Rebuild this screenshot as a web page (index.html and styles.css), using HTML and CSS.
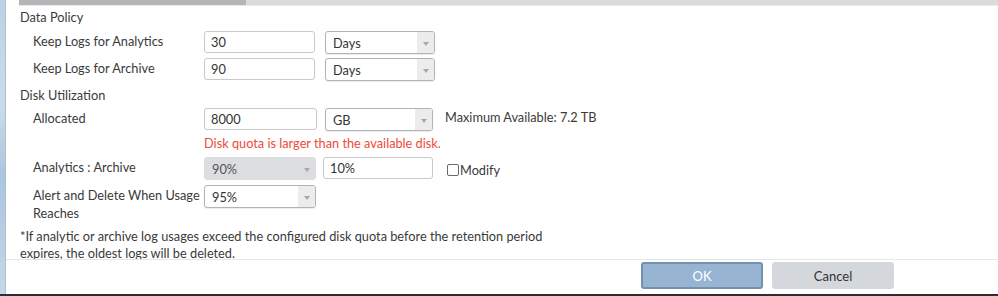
FILE: index.html
```html
<!DOCTYPE html>
<html>
<head>
<meta charset="utf-8">
<link rel="stylesheet" href="styles.css">
</head>
<body>
<div class="window">
  <div class="desk"></div>
  <div class="dialog">
    <div class="scroll">
      <div class="hbar"><div class="thumb"></div></div>
      <div class="content">
        <div class="section-title">Data Policy</div>
        <div class="row row-first">
          <div class="label">Keep Logs for Analytics</div>
          <div class="input w111">30</div>
          <div class="select w110 gap10">Days<span class="arrow"><i></i></span></div>
        </div>
        <div class="row">
          <div class="label">Keep Logs for Archive</div>
          <div class="input w111">90</div>
          <div class="select w110 gap10">Days<span class="arrow"><i></i></span></div>
        </div>
        <div class="section-title title-gap">Disk Utilization</div>
        <div class="row">
          <div class="label">Allocated</div>
          <div class="input w113">8000</div>
          <div class="select w108 gap8">GB<span class="arrow"><i></i></span></div>
          <div class="note">Maximum Available: 7.2 TB</div>
        </div>
        <div class="error">Disk quota is larger than the available disk.</div>
        <div class="row row-gap5">
          <div class="label">Analytics : Archive</div>
          <div class="select disabled w112">90%<span class="arrow"><i></i></span></div>
          <div class="input w110 gap7">10%</div>
          <label class="check"><span class="box"></span>Modify</label>
        </div>
        <div class="row row-gap5">
          <div class="label">Alert and Delete When Usage Reaches</div>
          <div class="select w112">95%<span class="arrow"><i></i></span></div>
        </div>
        <p class="footnote">*If analytic or archive log usages exceed the configured disk quota before the retention period expires, the oldest logs will be deleted.</p>
      </div>
    </div>
    <div class="footer">
      <button class="btn btn-ok">OK</button>
      <button class="btn btn-cancel">Cancel</button>
    </div>
  </div>
</div>
<div class="taskbar"></div>
</body>
</html>
```
FILE: styles.css
```css
* { box-sizing: border-box; }
html, body { margin: 0; padding: 0; }
body {
  width: 998px;
  height: 296px;
  overflow: hidden;
  background: #fff;
  font-family: Lato, "Open Sans", sans-serif;
  font-size: 12.75px;
  color: #3a3a3a;
}
.window {
  display: flex;
  height: 294px;
}
.desk {
  width: 5px;
  background: linear-gradient(180deg, #b9d2e8 0%, #c9dced 35%, #a9c6e0 60%, #c3d8eb 100%);
}
.dialog {
  flex: 1;
  display: flex;
  flex-direction: column;
  border-left: 1px solid #b9bcc2;
  background: #fff;
}
.scroll {
  height: 259px;
}
.hbar {
  height: 6px;
  margin-left: 13px;
  background: #dadbde;
  border-bottom: 1px solid #e9eaec;
}
.thumb {
  width: 227px;
  height: 5px;
  background: #b4b5b9;
}
.content {
  padding: 2px 0 0 14px;
}
.section-title {
  line-height: 18px;
  height: 18px;
}
.title-gap { margin-top: 5px; }
.row {
  display: flex;
  align-items: flex-start;
  margin-top: 4px;
}
.row-first { margin-top: 5px; }
.row-gap5 { margin-top: 5px; }
.label {
  width: 184px;
  padding-left: 13px;
  padding-top: 1px;
  padding-right: 2px;
  line-height: 18px;
}
.input {
  height: 22px;
  border: 1px solid #c9c9c9;
  border-radius: 3px;
  padding: 0 0 0 6px;
  line-height: 21px;
  color: #333;
  background: #fff;
}
.select {
  position: relative;
  height: 23px;
  border: 1px solid #b3b3b3;
  border-radius: 3px;
  box-shadow: 0 1px 1px rgba(0,0,0,0.08);
  padding-left: 7px;
  line-height: 23px;
  color: #333;
  background: #fff;
}
.select .arrow {
  position: absolute;
  top: 0;
  right: 0;
  bottom: 0;
  width: 17px;
  background: #ececec;
  border-radius: 0 2px 2px 0;
  display: flex;
  align-items: center;
  justify-content: center;
}
.select .arrow i {
  display: block;
  width: 0;
  height: 0;
  margin-top: 2px;
  border-left: 3px solid transparent;
  border-right: 3px solid transparent;
  border-top: 4px solid #a8a8a8;
}
.select.disabled {
  border-color: #dcdde0;
  background: #dcdde0;
  box-shadow: none;
  color: #555;
}
.select.disabled .arrow { background: transparent; }
.w108 { width: 108px; }
.w110 { width: 110px; }
.w111 { width: 111px; }
.w112 { width: 112px; }
.w113 { width: 113px; }
.gap7 { margin-left: 7px; }
.gap8 { margin-left: 8px; }
.gap10 { margin-left: 10px; }
.note {
  margin-left: 12px;
  line-height: 18px;
}
.error {
  margin: 3px 0 0 184px;
  line-height: 18px;
  color: #ee4a38;
}
.check {
  display: flex;
  align-items: center;
  margin-left: 14px;
  height: 23px;
  padding-top: 2px;
}
.check .box {
  width: 12px;
  height: 12px;
  border: 1px solid #6a6a6a;
  border-radius: 2px;
  margin-right: 1px;
}
.footnote {
  margin: 6px 0 0 0;
  width: 560px;
  line-height: 17px;
}
.footer {
  flex: 1;
  border-top: 1px solid #e6e6e8;
  display: flex;
  justify-content: flex-end;
  align-items: flex-start;
  gap: 9px;
  padding: 2px 104px 0 0;
}
.btn {
  width: 122px;
  height: 27px;
  border-radius: 3px;
  font-family: Lato, "Open Sans", sans-serif;
  font-size: 13px;
  padding: 0;
  cursor: pointer;
}
.btn-ok {
  background: #97b4d2;
  border: 2px solid #7390ad;
  color: #fff;
}
.btn-cancel {
  background: #d4d7dc;
  border: 1px solid #d4d7dc;
  color: #333;
}
.taskbar {
  height: 2px;
  background: #2e2e30;
}
```
